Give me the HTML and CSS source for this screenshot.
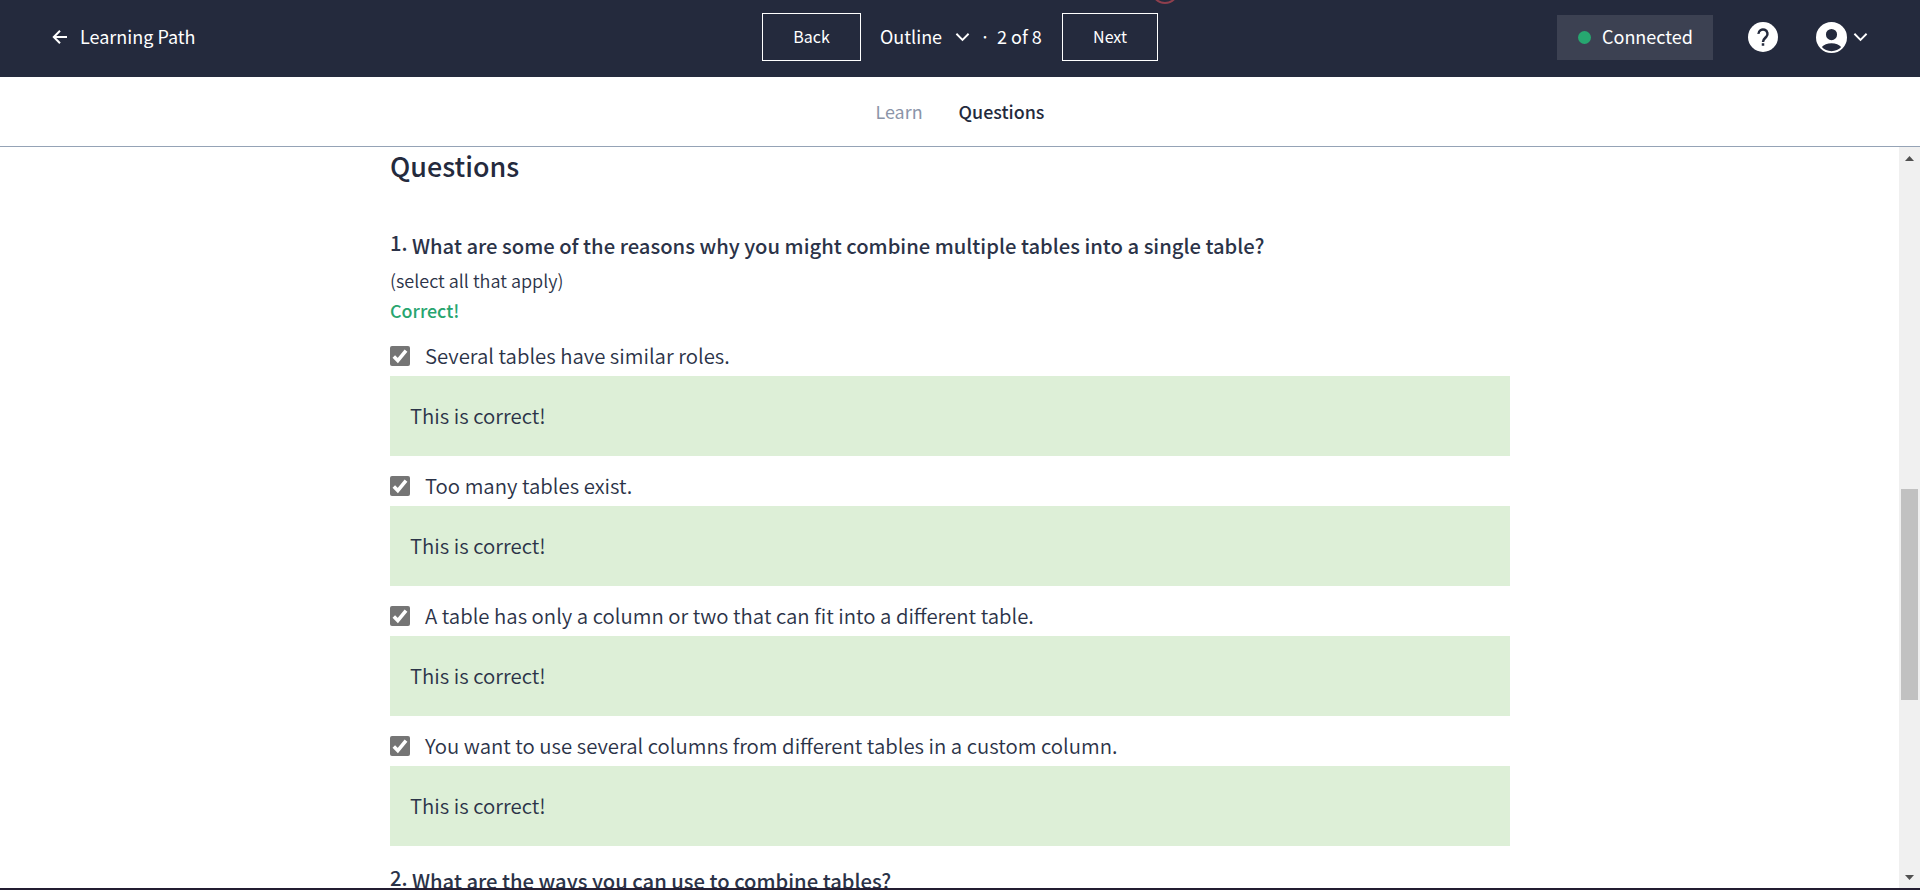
FILE: index.html
```html
<!DOCTYPE html>
<html lang="en">
<head>
<meta charset="utf-8">
<title>Learning Path</title>
<link rel="stylesheet" href="styles.css">
</head>
<body>
<div class="app">
  <header class="topbar">
    <a class="path-link"><svg class="arrow" viewBox="0 0 16 16"><path d="M15 8H2M8 1.8 1.8 8 8 14.2"/></svg><span>Learning Path</span></a>
    <nav class="pager">
      <button class="btn btn-back">Back</button>
      <span class="outline">Outline</span>
      <svg class="chevron outline-chevron" viewBox="0 0 16 10"><path d="m1.5 1.5 6.5 6.5 6.5-6.5"/></svg>
      <span class="dot">·</span>
      <span class="count">2 of 8</span>
      <button class="btn btn-next">Next</button>
    </nav>
    <div class="account">
      <div class="status"><i class="status-dot"></i><span>Connected</span></div>
      <svg class="help" viewBox="0 0 24 24"><circle cx="12" cy="12" r="12"/><path d="M8.400 9.500a3.600 3.500 0 1 1 6.200 2.400c-1.300 1.300-2.600 2-2.600 4"/><rect x="11" y="17" width="2" height="2"/></svg>
      <svg class="avatar" viewBox="2 2 20 20"><path fill-rule="evenodd" d="M12 2a10 10 0 1 0 0 20 10 10 0 0 0 0-20zm0 4.500a3.600 3.600 0 1 1 0 7.200 3.600 3.600 0 0 1 0-7.200zM5.800 18.200c1.100-1.500 3.600-2.500 6.200-2.500s5.100 1 6.200 2.500c-1.400 1.600-3.700 2.600-6.200 2.600s-4.800-1-6.200-2.600z"/></svg>
      <svg class="chevron" viewBox="0 0 16 10"><path d="m1.500 1.500 6.500 6.500 6.500-6.500"/></svg>
    </div>
    <i class="pulse"></i>
  </header>
  <nav class="tabs"><a class="tab">Learn</a><a class="tab active">Questions</a></nav>
  <div class="viewport">
    <main class="content">
      <h1 class="title">Questions</h1>
      <section class="question">
        <h2 class="prompt"><span class="num">1.</span><span class="prompt-text">What are some of the reasons why you might combine multiple tables into a single table?</span></h2>
        <p class="hint">(select all that apply)</p>
        <p class="result">Correct!</p>
        <div class="option"><svg class="check" viewBox="0 0 20 20"><rect width="20" height="20" rx="2"/><path d="m3.800 10.600 4 4L16 4.600"/></svg><span>Several tables have similar roles.</span></div>
        <div class="feedback"><span>This is correct!</span></div>
        <div class="option"><svg class="check" viewBox="0 0 20 20"><rect width="20" height="20" rx="2"/><path d="m3.800 10.600 4 4L16 4.600"/></svg><span>Too many tables exist.</span></div>
        <div class="feedback"><span>This is correct!</span></div>
        <div class="option"><svg class="check" viewBox="0 0 20 20"><rect width="20" height="20" rx="2"/><path d="m3.800 10.600 4 4L16 4.600"/></svg><span>A table has only a column or two that can fit into a different table.</span></div>
        <div class="feedback"><span>This is correct!</span></div>
        <div class="option"><svg class="check" viewBox="0 0 20 20"><rect width="20" height="20" rx="2"/><path d="m3.800 10.600 4 4L16 4.600"/></svg><span>You want to use several columns from different tables in a custom column.</span></div>
        <div class="feedback"><span>This is correct!</span></div>
      </section>
      <section class="question next-question">
        <h2 class="prompt"><span class="num">2.</span><span class="prompt-text">What are the ways you can use to combine tables?</span></h2>
      </section>
    </main>
    <div class="scrollbar">
      <svg class="sb-arrow" viewBox="0 0 9 5"><path d="M0 5 4.500 0 9 5z"/></svg>
      <div class="thumb"></div>
      <svg class="sb-arrow down" viewBox="0 0 9 5"><path d="m0 0 4.500 5L9 0z"/></svg>
    </div>
  </div>
  <div class="edge"></div>
</div>
</body>
</html>
```
FILE: styles.css
```css
* { box-sizing: border-box; }
body { margin: 0; background: #fff; color: #2b3348; font-family: "Noto Sans CJK JP", "Noto Sans", sans-serif; font-size: 20px; font-weight: 400; overflow: hidden; }
h1, h2, p { margin: 0; }
svg { display: block; flex: none; }
span { white-space: nowrap; }
.app { height: 890px; display: flex; flex-direction: column; }

.topbar { position: relative; flex: none; height: 77px; padding-bottom: 3px; background: #242a3d; color: #fff; display: grid; grid-template-columns: 762px 396px 1fr; align-items: center; font-size: 18px; line-height: 24px; overflow: hidden; }
.topbar span { padding-bottom: 2px; }
.path-link { display: flex; align-items: center; padding-left: 52px; gap: 12px; }
.arrow { width: 16px; height: 16px; fill: none; stroke: #fff; stroke-width: 2; }
.pager { display: flex; align-items: center; }
.btn { height: 48px; padding: 0 0 2px; border: 1px solid #fff; background: none; color: #fff; font: inherit; font-size: 16px; }
.btn-back { width: 99px; margin-right: 19px; }
.btn-next { width: 96px; margin-left: auto; }
.outline { width: 75px; }
.chevron { width: 15px; height: 10px; fill: none; stroke: #fff; stroke-width: 2; }
.dot { width: 27px; padding-left: 3px; text-align: center; }
.account { display: flex; align-items: center; padding-left: 399px; }
.status { width: 156px; height: 45px; flex: none; background: #3c4152; display: flex; align-items: center; padding-left: 21px; gap: 11px; margin-right: 35px; }
.status-dot { width: 13px; height: 13px; border-radius: 50%; background: #27a770; }
.help { width: 30px; height: 30px; fill: #fff; margin-right: 38px; }
.help path { fill: none; stroke: #242a3d; stroke-width: 2; }
.help rect { fill: #242a3d; }
.avatar { width: 31px; height: 31px; fill: #fff; margin-right: 6px; }
.pulse { position: absolute; left: 1151px; top: -24px; width: 28px; height: 28px; border: 2px solid #8f3f4d; border-radius: 50%; }

.tabs { flex: none; height: 70px; padding-bottom: 2px; border-bottom: 1px solid #95a3b6; display: flex; justify-content: center; align-items: center; gap: 36px; font-size: 17.9px; color: #8a94a8; }
.active { color: #242a3d; font-weight: 500; }

.viewport { flex: 1; min-height: 0; display: flex; overflow: hidden; }
.content { width: 1120px; margin-left: 390px; color: #2b3348; }
.title { font-size: 26.9px; font-weight: 500; line-height: 38px; color: #242a3d; height: 79px; }
.prompt { display: flex; gap: 4px; font-size: 20.22px; font-weight: 500; line-height: 40px; height: 39px; }
.num { margin-top: -3px; width: 18px; }
.hint { font-size: 18.05px; font-weight: 350; line-height: 30px; height: 30px; }
.result { font-size: 17.9px; line-height: 30px; font-weight: 500; color: #27a56f; height: 31px; }
.option { height: 50px; padding-top: 10px; display: flex; align-items: center; gap: 15px; font-size: 20.35px; font-weight: 350; }
.option span { padding-bottom: 2px; }
.check { width: 20px; height: 20px; }
.check rect { fill: #757575; }
.check path { fill: none; stroke: #fff; stroke-width: 3.6; }
.feedback { height: 80px; background: #ddefd7; padding-left: 20px; line-height: 78px; font-size: 20.35px; font-weight: 350; }
.next-question { padding-top: 15px; }

.scrollbar { width: 21px; margin-left: auto; background: #f0f0f0; display: flex; flex-direction: column; align-items: center; padding: 9px 0 8px; }
.sb-arrow { width: 9px; height: 5px; fill: #505050; }
.down { margin-top: auto; }
.thumb { width: 17px; height: 211px; background: #c1c1c1; margin-top: 328px; }
.edge { flex: none; height: 2px; background: #231d31; }
```
